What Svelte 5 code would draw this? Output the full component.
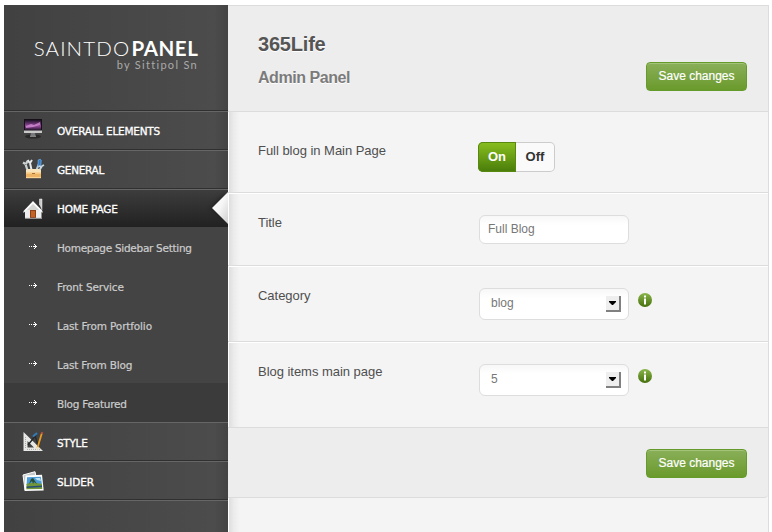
<script>
  const top = [
    { icon: 'screen', label: 'OVERALL ELEMENTS', spacing: -0.24, lift: 0, iconY: -2 },
    { icon: 'tools', label: 'GENERAL', spacing: -0.32, lift: 0, iconY: -1 },
    { icon: 'house', label: 'HOME PAGE', active: true, spacing: -0.22, lift: 2, iconY: 1 },
  ];
  const sub = [
    { label: 'Homepage Sidebar Setting', spacing: -0.29 },
    { label: 'Front Service', spacing: -0.15 },
    { label: 'Last From Portfolio', spacing: -0.15 },
    { label: 'Last From Blog', spacing: -0.18 },
    { label: 'Blog Featured', spacing: -0.25 },
  ];
  const bottom = [
    { icon: 'ruler', label: 'STYLE', spacing: -0.3, lift: 2, iconY: 0 },
    { icon: 'photo', label: 'SLIDER', spacing: -0.1, lift: 2, iconY: 1 },
  ];
</script>

{#snippet icon(name, y)}
  <svg class="icon" style="margin-top: {y * 2}px" viewBox="0 0 24 24" width="24" height="24">
    {#if name === 'screen'}
      <defs>
        <linearGradient id="sky" x2="0" y2="1"><stop stop-color="#1b1024" /><stop offset=".6" stop-color="#9a4a9f" /><stop offset="1" stop-color="#24162f" /></linearGradient>
      </defs>
      <ellipse cx="12" cy="19.5" rx="8" ry="2" fill="#292929" />
      <rect x="3" y="2" width="18" height="14" rx=".6" fill="#c9c9c9" />
      <rect x="3" y="2" width="18" height="11.5" fill="#171019" />
      <rect x="4" y="3" width="16" height="10" fill="url(#sky)" />
      <path d="M5 9l5-2 3 1 6-3v3l-7 2-7 1z" fill="#df9ce4" opacity=".65" />
      <path d="M10 16h4l.7 3H9.3z" fill="#75797b" />
      <path d="M9 19.3h6" stroke="#999" />
    {:else if name === 'tools'}
      <path d="M7 15L4.7 7.7M4.5 7L2 5.5M5 7l1.5-3" stroke="#ccd2d4" stroke-width="2.2" />
      <path d="M11 15L9 6M8.7 6L6.7 3M9 6l2-3" stroke="#e6eaea" stroke-width="2" />
      <path d="M15 14l3-7" stroke="#b7c8d7" stroke-width="2" />
      <path d="M17 9l.2-6 2-.8 1 .8L19.8 9z" fill="#347bc7" stroke="#79b5e9" stroke-width=".7" />
      <path d="M18 14l3-5M20 10l-2-1m3 0l2-1" stroke="#c9d6dd" stroke-width="1.8" />
      <path d="M5 13l2-1h11l2 1v3H5z" fill="#f7e4bc" />
      <path d="M5 15.5h15V21H5z" fill="#edb465" />
      <path d="M5 16h15M5 20.7h15" stroke="#ffdca0" />
      <path d="M11 16.5h3" stroke="#a8743c" />
    {:else if name === 'house'}
      <path d="M18.5 8V2H21v11" fill="#ccc" stroke="#f5f5f5" stroke-width=".5" />
      <path d="M4 21v-8L12 5l8.5 8v8z" fill="#eee" />
      <path d="M12 4L2.5 14v2L12 7l9.5 9v-2z" fill="#fafafa" />
      <path d="M12 7l-6 6h12z" fill="#d4d4d1" />
      <path d="M9 13h6v8H9z" fill="#8e3f18" />
      <path d="M10 14h4v6h-4z" fill="#c26224" />
      <path d="M4 21.3h17" stroke="#aaa" />
    {:else if name === 'ruler'}
      <path d="M2.5 2v19H22zM6.5 11l6.5 6.5H6.5z" fill="#e8e8e6" fill-rule="evenodd" />
      <path d="M4.5 7v12M6 19.4h13" stroke="#aaa" stroke-dasharray="1 1" />
      <path d="M15 5L7 15M14 5l3 11" stroke="#252a2c" stroke-width="1.4" />
      <path d="M12 6.5l4-3.5" stroke="#347bb9" stroke-width="2" />
      <path d="M21 2.8L16.4 18" stroke="#e99b24" stroke-width="1.8" />
      <path d="M21.4 2l-.5 2" stroke="#b9473d" stroke-width="1.8" />
      <path d="M16.8 17l-.6 2.5" stroke="#f7ddb1" stroke-width="1.5" />
    {:else}
      <path d="M2 5l12-3.3 3 15L4 20z" fill="#c3c7c7" stroke="#fff" />
      <path d="M4.5 5.5L21 4.7 22.7 20.5 3.5 21z" fill="#fff" />
      <path d="M6 7.3l13.8-.6L21 15H5.6z" fill="#4b9bd6" />
      <path d="M5.6 14c5-2 10-1 15.3 0l.4 5-16 .3z" fill="#71963b" />
      <path d="M5.6 16.5l15.4-1v1.6l-15.4.8z" fill="#244c75" />
      <path d="M8 14l2-5 2-1 4 6-3-2-1 2-1-3z" fill="#284d32" />
      <path d="M14 8h5l1 3-4-1z" fill="#bce1f3" />
    {/if}
  </svg>
{/snippet}

{#snippet item(entry)}
  <div class="item" class:active={entry.active}>
    {@render icon(entry.icon, entry.iconY)}
    <span style="letter-spacing: {entry.spacing}px; padding-top: {entry.lift}px">{entry.label}</span>
    {#if entry.active}
      <svg class="notch" viewBox="0 0 16 32" width="16" height="32">
        <defs><linearGradient id="notchFill" x2="1" y2="1"><stop stop-color="#fff" /><stop offset=".5" stop-color="#f6f6f6" /><stop offset="1" stop-color="#cfcfcf" /></linearGradient></defs>
        <path d="M16 0v32L0 16z" fill="url(#notchFill)" />
      </svg>
    {/if}
  </div>
{/snippet}

{#snippet info()}
  <svg class="info" viewBox="0 0 14 14" width="14" height="14">
    <defs><linearGradient id="infoFill" x2="0" y2="1"><stop stop-color="#8bb64a" /><stop offset="1" stop-color="#456f0b" /></linearGradient></defs>
    <circle cx="7" cy="7" r="7" fill="url(#infoFill)" />
    <path d="M6 2.5h2v2H6zM6 5.5h2v6H6z" fill="#fff" />
  </svg>
{/snippet}

{#snippet select(value)}
  <div class="field select">
    <span>{value}</span>
    <i><svg viewBox="0 0 7 4" width="7" height="4"><path d="M0 0h7v1L4 4H3L0 1z" /></svg></i>
  </div>
{/snippet}

<div class="page">
  <aside>
    <div class="logo">
      <div class="name"><span>SAINTDO</span><b>PANEL</b></div>
      <small>by Sittipol Sn</small>
    </div>
    {#each top as entry}{@render item(entry)}{/each}
    <div class="sub">
      {#each sub as link, i}
        <div class="link" class:current={i === sub.length - 1}>
          <svg viewBox="0 0 8 5" width="8" height="5" shape-rendering="crispEdges"><path d="M0 2h1v1H0zM2 2h1v1H2zM4 2h4v1H4zM5 0h1v1H5zM6 1h1v1H6zM6 3h1v1H6zM5 4h1v1H5z" fill="#fff" /></svg>
          <span style="letter-spacing: {link.spacing}px">{link.label}</span>
        </div>
      {/each}
    </div>
    {#each bottom as entry}{@render item(entry)}{/each}
    <div class="rest"></div>
  </aside>
  <main>
    <header>
      <div>
        <h1>365Life</h1>
        <h2>Admin Panel</h2>
      </div>
      <button class="save">Save changes</button>
    </header>
    <section class="rows">
      <div class="row r1">
        <span class="label">Full blog in Main Page</span>
        <div class="toggle"><b class="on">On</b><b class="off">Off</b></div>
      </div>
      <div class="row r2">
        <span class="label">Title</span>
        <div class="field text"><span>Full Blog</span></div>
      </div>
      <div class="row r3">
        <span class="label">Category</span>
        {@render select('blog')}
        {@render info()}
      </div>
      <div class="row r4">
        <span class="label">Blog items main page</span>
        {@render select('5')}
        {@render info()}
      </div>
    </section>
    <footer><button class="save">Save changes</button></footer>
    <div class="tail"></div>
  </main>
</div>

<style>
  :global(body) { background: #fff; overflow: hidden; }
  * { box-sizing: border-box; }
  .page { display: flex; width: 772px; height: 532px; padding: 5px 3px 0 4px; font-family: 'Liberation Sans', Arial, sans-serif; }
  aside { width: 224px; display: flex; flex-direction: column; font-family: 'DejaVu Sans', Verdana, sans-serif; background: linear-gradient(90deg, #414141, #4c4c4c 94%, #434343); }
  .logo { height: 106px; border-bottom: 1px solid #303030; padding: 32px 30px 0 0; color: #fff; font-family: Lato, sans-serif; display: flex; flex-direction: column; align-items: flex-end; }
  .name { display: flex; font-size: 20.5px; line-height: 22px; white-space: nowrap; }
  .name span { font-weight: 300; letter-spacing: 1.15px; margin-right: 1px; }
  .name b { font-weight: 700; letter-spacing: .6px; margin-right: -.5px; }
  small { font-size: 11px; line-height: 12px; letter-spacing: 1.3px; color: #aaa; font-weight: 400; }
  .item { position: relative; height: 39px; flex: none; display: flex; align-items: center; padding-left: 17px; gap: 12px; border-top: 1px solid #666; border-bottom: 1px solid #303030; font-size: 10.5px; color: #fff; white-space: nowrap; -webkit-text-stroke: .3px #fff; }
  .item.active { height: 38px; background: linear-gradient(#3d3d3d, #222); border-bottom-color: #222; }
  .icon { flex: none; }
  .notch { position: absolute; right: 0; top: 2px; filter: drop-shadow(-2px 0 2px #222); clip-path: inset(-4px 0 -4px -6px); }
  .sub { height: 195px; flex: none; background: #444; display: flex; flex-direction: column; }
  .link { flex: 1; display: flex; align-items: center; padding-left: 25px; gap: 20px; font-size: 10.5px; color: #ccc; white-space: nowrap; -webkit-text-stroke: .2px #ccc; }
  .link span { padding-top: 2px; }
  .link svg { margin-top: 0; }
  .link.current { background: #3b3b3b; }
  .rest { flex: 1; border-top: 1px solid #666; }
  main { flex: 1; display: flex; flex-direction: column; border: 1px solid #dcdcdc; border-width: 1px 1px 0 0; background: #f4f4f4; }
  header { height: 106px; flex: none; display: flex; justify-content: space-between; padding: 26px 21px 0 30px; background: #ededed; border-bottom: 1px solid #dcdcdc; }
  h1, h2 { margin: 0; font-weight: 700; white-space: nowrap; text-shadow: 0 1px 0 #fff; }
  h1 { font-size: 20px; line-height: 24px; color: #555; letter-spacing: -.2px; }
  h2 { font-size: 16px; line-height: 20px; margin-top: 12px; color: #7b7b7b; letter-spacing: -.45px; }
  .save { width: 101px; height: 29px; padding: 0 0 1px; border: 1px solid #659b2b; border-radius: 4px; background: linear-gradient(#8aaf59, #6a9a2c); box-shadow: inset 0 1px 0 #a3c37b; color: #fff; font: 12px 'Liberation Sans', Arial, sans-serif; white-space: nowrap; -webkit-text-stroke: .2px #fff; }
  header .save { margin-top: 30px; }
  .rows { display: flex; flex-direction: column; background: linear-gradient(90deg, #fff 0 1px, #dedede 1px, #ececec 6px, #f4f4f4 12px); }
  .row { display: flex; align-items: flex-start; padding-left: 30px; border-bottom: 1px solid #dcdcdc; border-top: 1px solid #fff; }
  .r1 { height: 81px; border-top: 0; padding-top: 30px; }
  .r2 { height: 73px; padding-top: 21px; }
  .r3 { height: 76px; padding-top: 21px; }
  .r4 { height: 86px; padding-top: 21px; }
  .label { width: 221px; flex: none; font-size: 13px; line-height: 15px; letter-spacing: -.03px; color: #4f4f4f; white-space: nowrap; }
  .r1 .label { width: 220px; line-height: 17px; }
  .toggle { display: flex; width: 77px; height: 30px; line-height: 29px; font-size: 13px; text-align: center; border-radius: 5px; }
  .on { width: 38px; color: #fff; border-radius: 5px 0 0 5px; background: linear-gradient(#8abf20, #487c0a); box-shadow: inset 0 0 0 1px #58880f; }
  .off { width: 39px; color: #333; background: #fafafa; border: 1px solid #ccc; border-left: 0; border-radius: 0 5px 5px 0; line-height: 27px; }
  .field { width: 150px; flex: none; display: flex; align-items: center; border: 1px solid #ddd; border-radius: 6px; background: linear-gradient(#f7f7f7, #fff 9px); color: #777; font-size: 12px; }
  .text { height: 29px; padding-left: 8px; }
  .text span { padding-bottom: 1px; }
  .select { height: 32px; justify-content: space-between; padding: 0 7px 0 11px; }
  .select span { padding-bottom: 2px; }
  .select i { width: 15px; height: 16px; display: flex; align-items: center; justify-content: center; background: #eee; border: solid #808080; border-width: 0 2px 2px 0; }
  .info { margin: 5px 0 0 9px; }
  footer { height: 70px; flex: none; display: flex; justify-content: flex-end; padding: 21px 21px 0 0; background: #ededed; border-bottom: 1px solid #dcdcdc; border-radius: 0 0 4px 0; }
  .tail { flex: 1; background: linear-gradient(90deg, #fff 0 1px, #dedede 1px, #ececec 6px, #f4f4f4 12px); }
</style>
